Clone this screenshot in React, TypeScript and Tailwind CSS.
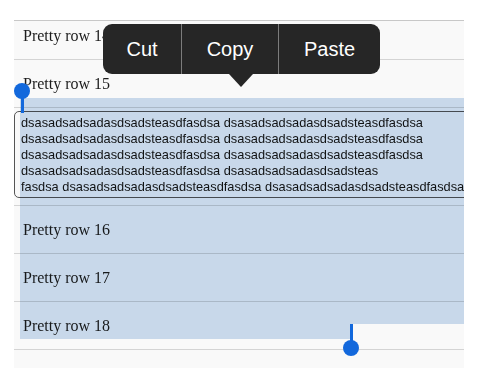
import React from 'react';

const word = 'dsasadsadsadasdsadsteasdfasdsa';

const lines = [
  `${word} ${word}`,
  `${word} ${word}`,
  `${word} ${word}`,
  `${word} dsasadsadsadasdsadsteas`,
  `fasdsa ${word} ${word}`,
];

function Row({ label }: { label: string }) {
  return (
    <div className="h-[48px] shrink-0 border-b border-[#d4d4d4] flex items-center pl-[9px] text-[16px] text-[#1c1c1c] [font-family:'Liberation_Serif',serif]">
      {label}
    </div>
  );
}

export default function App() {
  return (
    <div className="relative w-[480px] h-[392px] bg-white overflow-hidden">
      {/* table */}
      <div className="relative ml-[14px] mt-[20px] w-[450px] h-[348px] overflow-hidden bg-[#f9f9f9] border-t border-[#c8c8c8]">
        <div className="flex flex-col -mt-[9px]">
          <Row label="Pretty row 14" />
          <Row label="Pretty row 15" />
          <div className="h-[98px] shrink-0 border-b border-[#d4d4d4] pt-[3px]">
            <div className="w-[460px] h-[87px] rounded-[5px] border border-[#555] pt-[3px] pl-[6px] text-[12.8px] leading-[16px] text-[#151515] [font-family:'Liberation_Sans',Arial,sans-serif] whitespace-pre">
              {lines.map((l, i) => (
                <div key={i}>{l}</div>
              ))}
            </div>
          </div>
          <Row label="Pretty row 16" />
          <Row label="Pretty row 17" />
          <Row label="Pretty row 18" />
          <Row label="Pretty row 19" />
        </div>

        {/* selection highlight */}
        <div className="absolute left-[6px] top-[77px] w-[444px] h-[226px] bg-[#cddef0] mix-blend-multiply pointer-events-none" />
        <div className="absolute left-[6px] top-[303px] w-[331px] h-[15px] bg-[#cddef0] mix-blend-multiply pointer-events-none" />
      </div>

      {/* selection handles */}
      <div className="absolute left-[21px] top-[91px] w-[3px] h-[22px] bg-[#1268dc]" />
      <div className="absolute left-[14px] top-[83px] w-[16px] h-[16px] rounded-full bg-[#1268dc]" />
      <div className="absolute left-[350px] top-[324px] w-[3px] h-[24px] bg-[#1268dc]" />
      <div className="absolute left-[343px] top-[340px] w-[16px] h-[16px] rounded-full bg-[#1268dc]" />

      {/* edit menu */}
      <div className="absolute left-[103px] top-[24px]">
        <div className="flex h-[50px] w-[277px] rounded-[9px] bg-[#262626] text-white text-[20px] [font-family:'Liberation_Sans',Arial,sans-serif]">
          <div className="w-[79px] flex items-center justify-center border-r border-[#7c7c7c]">Cut</div>
          <div className="w-[97px] flex items-center justify-center border-r border-[#7c7c7c]">Copy</div>
          <div className="flex-1 flex items-center justify-center">Paste</div>
        </div>
        <div className="ml-[126px] w-0 h-0 border-l-[12px] border-r-[12px] border-t-[13px] border-l-transparent border-r-transparent border-t-[#262626]" />
      </div>
    </div>
  );
}
